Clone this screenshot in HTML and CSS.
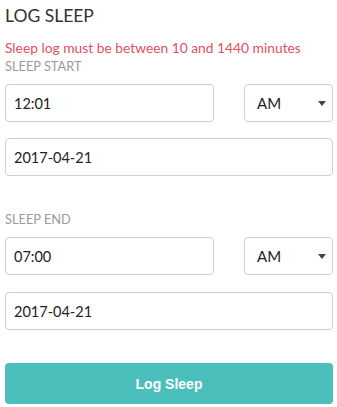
FILE: index.html
```html
<!DOCTYPE html>
<html lang="en">
<head>
<meta charset="utf-8">
<title>Log Sleep</title>
<link rel="stylesheet" href="styles.css">
</head>
<body>
<div class="page">
  <h1 class="title">LOG SLEEP</h1>
  <p class="error">Sleep log must be between 10 and 1440 minutes</p>

  <section class="group">
    <div class="label">SLEEP START</div>
    <div class="row">
      <input class="field time" type="text" value="12:01">
      <div class="select"><span>AM</span><svg class="caret" width="8" height="5" viewBox="0 0 8 5"><path d="M0 0H8L4 5Z" fill="#444"/></svg></div>
    </div>
    <input class="field date" type="text" value="2017-04-21">
  </section>

  <section class="group end">
    <div class="label">SLEEP END</div>
    <div class="row">
      <input class="field time" type="text" value="07:00">
      <div class="select"><span>AM</span><svg class="caret" width="8" height="5" viewBox="0 0 8 5"><path d="M0 0H8L4 5Z" fill="#444"/></svg></div>
    </div>
    <input class="field date date-end" type="text" value="2017-04-21">
  </section>

  <button class="submit" type="button">Log Sleep</button>
</div>
</body>
</html>
```

FILE: styles.css
```css
* { box-sizing: border-box; }
html, body { margin: 0; padding: 0; background: #fff; }
body { font-family: Lato, "Open Sans", sans-serif; }
.page { padding: 6px 4px 0 5px; width: 337px; }
.title {
  margin: 0 0 14px 0;
  font-size: 17.5px;
  line-height: 20px;
  font-weight: 400;
  color: #333;
}
.error {
  margin: 0;
  font-size: 13.8px;
  line-height: 16px;
  color: #e0505f;
}
.label {
  margin-top: 3px;
  font-size: 12.8px;
  line-height: 15px;
  color: #9a9a9a;
}
.group.end .label { margin-top: 36px; }
.row {
  margin-top: 10px;
  display: flex;
  justify-content: space-between;
}
.field {
  display: block;
  height: 38px;
  border: 1px solid #cfcfcf;
  border-radius: 4px;
  padding: 0 8px;
  font-family: Lato, "Open Sans", sans-serif;
  font-size: 14.5px;
  color: #222;
  background: #fff;
  outline: none;
}
.time { width: 209px; }
.date { width: 328px; margin-top: 16px; }
.date-end { margin-top: 17px; }
.select {
  width: 89px;
  height: 38px;
  border: 1px solid #cfcfcf;
  border-radius: 4px;
  display: flex;
  align-items: center;
  justify-content: space-between;
  padding: 0 6px 0 12px;
  font-size: 15px;
  color: #222;
}
.caret { display: block; }
.submit {
  display: block;
  margin-top: 33px;
  width: 328px;
  height: 41px;
  border: none;
  border-radius: 4px;
  background: #4bbfbb;
  color: #fff;
  font-family: "Liberation Sans", Arial, sans-serif;
  font-weight: 700;
  font-size: 14px;
}
```
